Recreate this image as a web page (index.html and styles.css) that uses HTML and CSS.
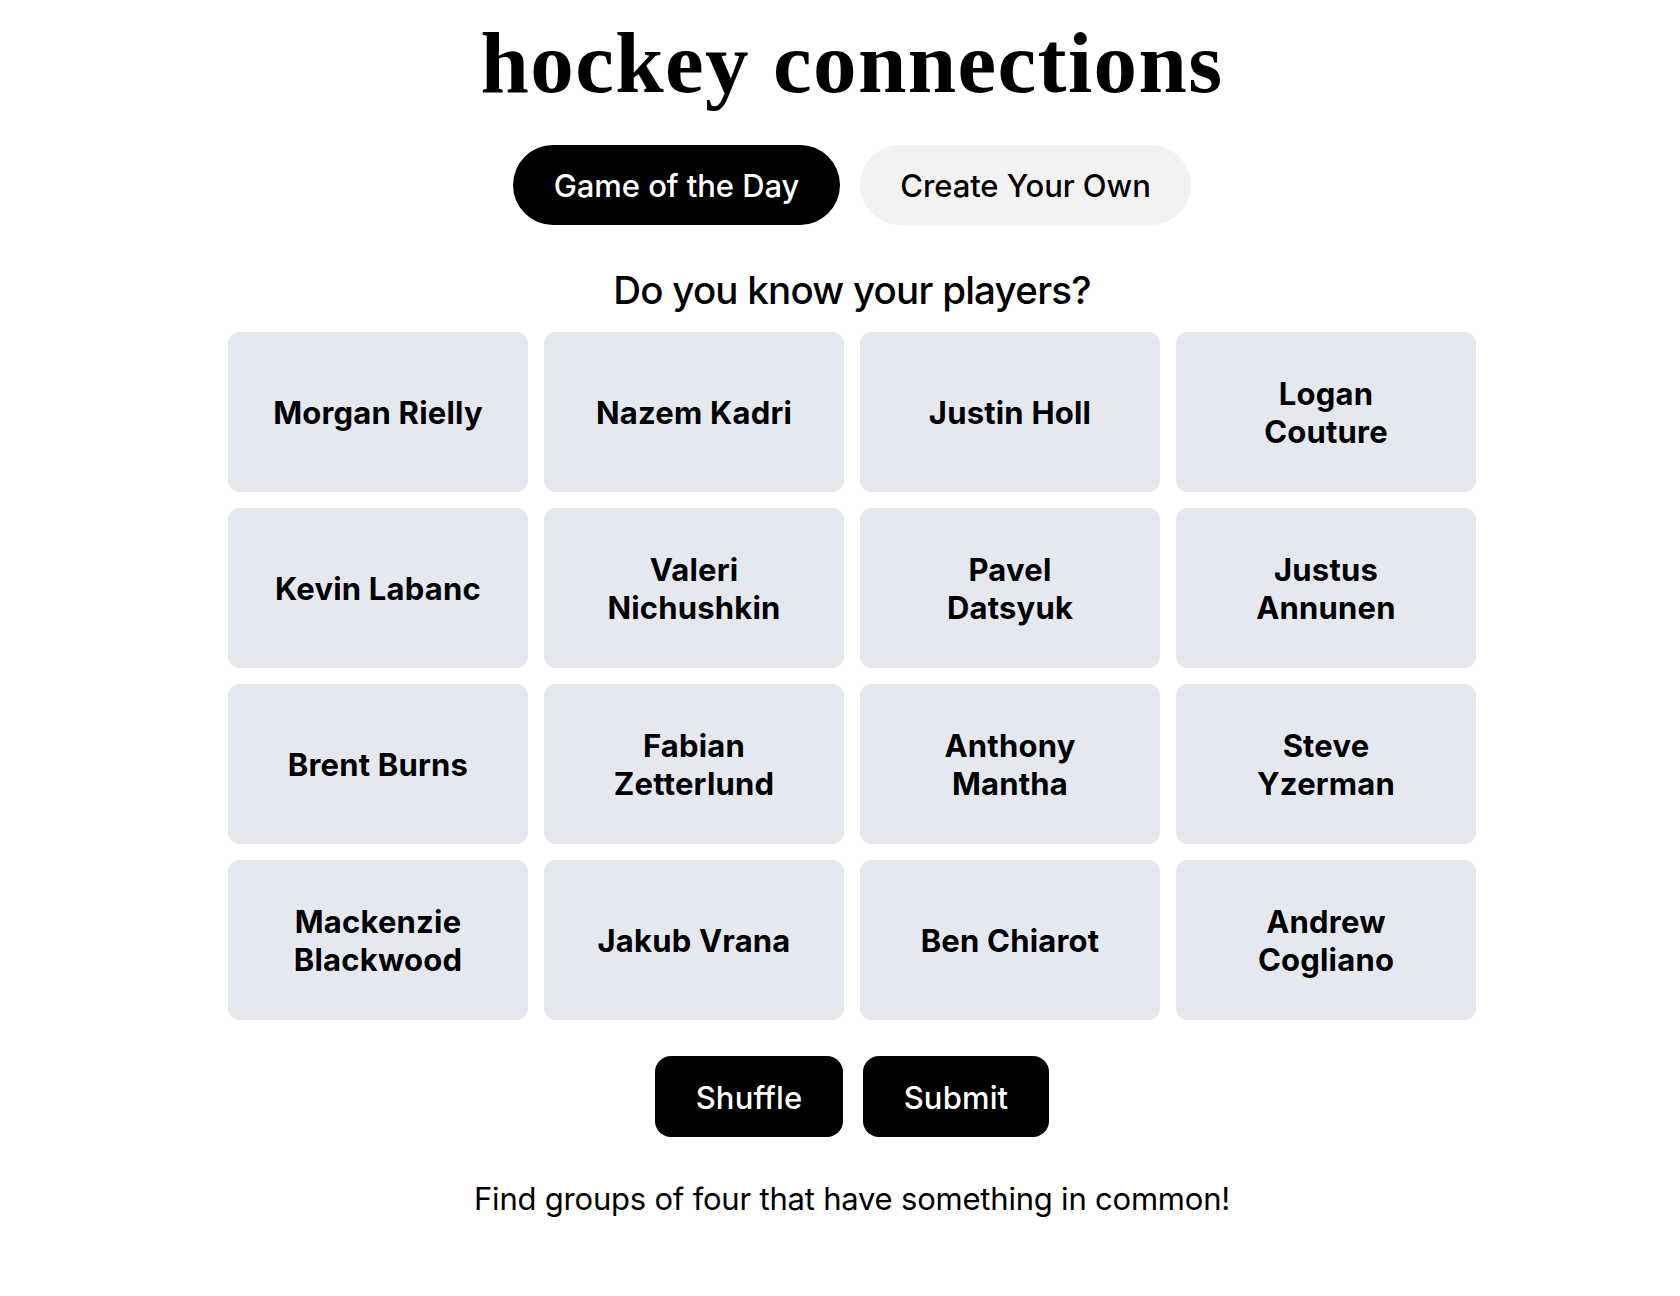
FILE: index.html
```html
<!DOCTYPE html>
<html lang="en">
<head>
<meta charset="utf-8">
<title>hockey connections</title>
<link rel="stylesheet" href="styles.css">
</head>
<body>
<main class="page">
  <h1 class="title">hockey connections</h1>
  <nav class="tabs">
    <button class="tab tab-active">Game of the Day</button>
    <button class="tab tab-create">Create Your Own</button>
  </nav>
  <h2 class="prompt">Do you know your players?</h2>
  <section class="grid">
    <button class="card">Morgan Rielly</button>
    <button class="card">Nazem Kadri</button>
    <button class="card">Justin Holl</button>
    <button class="card">Logan<br>Couture</button>
    <button class="card">Kevin Labanc</button>
    <button class="card">Valeri<br>Nichushkin</button>
    <button class="card">Pavel<br>Datsyuk</button>
    <button class="card">Justus<br>Annunen</button>
    <button class="card">Brent Burns</button>
    <button class="card">Fabian<br>Zetterlund</button>
    <button class="card">Anthony<br>Mantha</button>
    <button class="card">Steve<br>Yzerman</button>
    <button class="card">Mackenzie<br>Blackwood</button>
    <button class="card">Jakub Vrana</button>
    <button class="card">Ben Chiarot</button>
    <button class="card">Andrew<br>Cogliano</button>
  </section>
  <div class="actions">
    <button class="action shuffle">Shuffle</button>
    <button class="action submit">Submit</button>
  </div>
  <p class="hint">Find groups of four that have something in common!</p>
</main>
</body>
</html>
```
FILE: styles.css
```css
* { box-sizing: border-box; }
body { margin: 0; background: #fff; color: #000; font-family: Inter, sans-serif; }
button { border: 0; padding: 0; font: inherit; color: inherit; white-space: nowrap; }
.page { width: 1248px; margin-left: 228px; display: flex; flex-direction: column; align-items: center; }
.title { margin: 0; height: 145px; padding-top: 13px; font: bold 87px/100px "Liberation Serif", serif; letter-spacing: 1.4px; white-space: nowrap; }
.tabs { display: flex; gap: 20px; height: 80px; }
.tab { height: 80px; border-radius: 40px; font-size: 31px; line-height: 40px; font-weight: 500; padding-top: 2px; letter-spacing: -0.07px; }
.tab-active { width: 327px; background: #000; color: #fff; }
.tab-create { width: 331px; background: #f2f2f2; }
.prompt { margin: 41px 0 17px; height: 49px; line-height: 49px; font-size: 38.5px; font-weight: 500; letter-spacing: -0.76px; white-space: nowrap; }
.grid { display: grid; grid-template-columns: repeat(4, 300px); grid-auto-rows: 160px; gap: 16px; }
.card { background: #e6e8f0; border-radius: 12px; font-size: 31px; line-height: 38px; font-weight: 700; letter-spacing: 0.2px; padding-top: 2px; }
.actions { display: flex; gap: 20px; margin-top: 36px; }
.action { height: 81px; border-radius: 16px; background: #000; color: #fff; font-size: 31px; font-weight: 500; letter-spacing: 0.15px; padding-top: 2px; }
.shuffle { width: 188px; }
.submit { width: 186px; }
.hint { margin: 42px 0 0; font-size: 31px; line-height: 40px; letter-spacing: -0.21px; white-space: nowrap; }
```
